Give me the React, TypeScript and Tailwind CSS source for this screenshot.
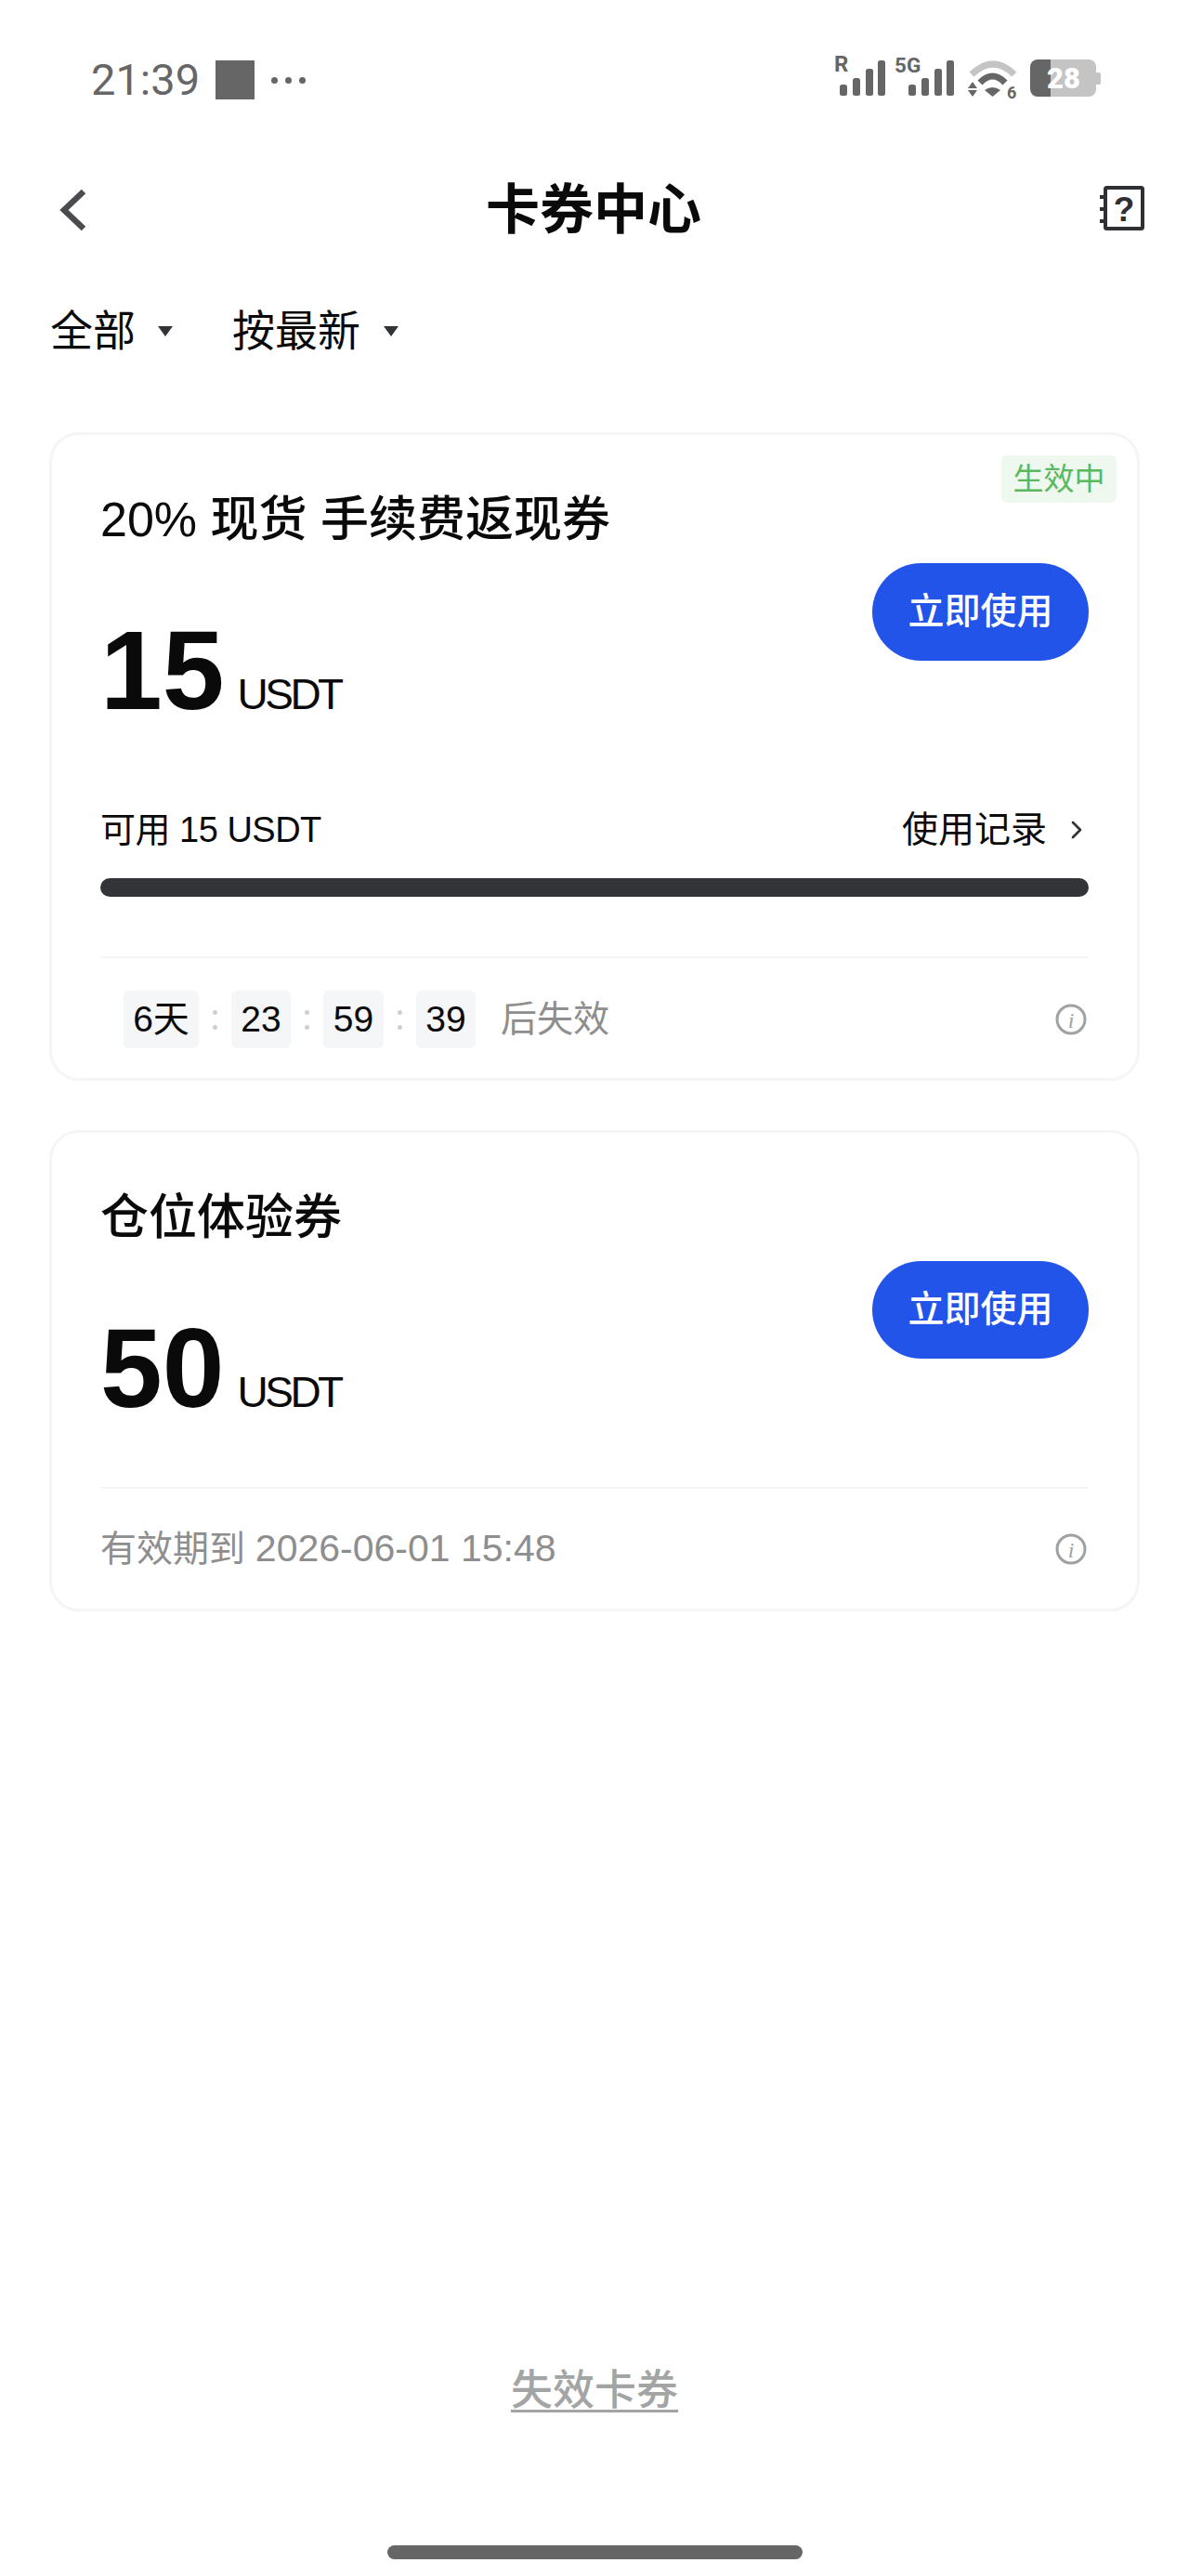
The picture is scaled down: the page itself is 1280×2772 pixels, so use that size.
import { ChevronRight } from "lucide-react";

const FONT = "font-['Liberation_Sans','Noto_Sans_CJK_SC',sans-serif]";

function SignalBars({ x = 0 }: { x?: number }) {
    return (
        <g fill="#666666" transform={`translate(${x} 0)`}>
            <rect x="6" y="31" width="8" height="12" rx="2.5" />
            <rect x="20" y="24" width="8" height="19" rx="2.5" />
            <rect x="34" y="14" width="8" height="29" rx="2.5" />
            <rect x="47" y="5" width="8" height="38" rx="2.5" />
        </g>
    );
}

function StatusIcons() {
    return (
        <svg width="290" height="64" viewBox="0 -8 290 64" className="block">
            {/* R signal */}
            <text x="0" y="17" fontFamily="Roboto, sans-serif" fontWeight="700" fontSize="24" fill="#666666">R</text>
            <SignalBars />
            {/* 5G signal */}
            <text x="65" y="18" fontFamily="Roboto, sans-serif" fontWeight="700" fontSize="22.5" fill="#666666">5G</text>
            <SignalBars x={74} />
            {/* wifi */}
            <path d="M148 20 Q171 -2 194 20" fill="none" stroke="#c4c4c4" strokeWidth="7" />
            <path d="M157 29 Q170.5 15 184 29" fill="none" stroke="#666666" strokeWidth="7" />
            <path d="M162 37 Q170.5 31 179 37 L170.5 44 Z" fill="#666666" />
            <path d="M144 35 L149 28 L154 35 Z M144 37 L154 37 L149 44 Z" fill="#666666" />
            <text x="186" y="46" fontFamily="Roboto, sans-serif" fontWeight="700" fontSize="18" fill="#666666">6</text>
            {/* battery */}
            <path d="M211 12 a8 8 0 0 1 8 -8 h14 v40 h-14 a8 8 0 0 1 -8 -8 Z" fill="#666666" />
            <path d="M233 4 h41 a8 8 0 0 1 8 8 v24 a8 8 0 0 1 -8 8 h-41 Z" fill="#c4c4c4" />
            <path d="M282 18 h3 a2 2 0 0 1 2 2 v9 a2 2 0 0 1 -2 2 h-3 Z" fill="#c4c4c4" />
            <text x="229" y="35" fontFamily="Roboto, sans-serif" fontWeight="900" fontSize="31" fill="#ffffff">28</text>
        </svg>
    );
}

function HelpBookIcon() {
    return (
        <svg width="48" height="48" viewBox="0 0 48 48" className="mb-[4px] block">
            <rect x="6" y="2" width="40" height="44" rx="1.5" fill="none" stroke="#2f3033" strokeWidth="4" />
            <path d="M0 12 h6 M0 25 h6 M0 38 h6" stroke="#2f3033" strokeWidth="4" />
            <text x="26" y="38" textAnchor="middle" fontFamily="Liberation Sans, sans-serif" fontWeight="700" fontSize="37" fill="#2f3033">?</text>
        </svg>
    );
}

function Caret() {
    return (
        <svg width="18" height="13" viewBox="0 0 18 13" className="block">
            <path d="M1 1 L17 1 L9 12 Z" fill="#333438" />
        </svg>
    );
}

function InfoIcon() {
    return (
        <svg width="34" height="34" viewBox="0 0 34 34" className="mr-[2px] block">
            <circle cx="17" cy="17" r="15" fill="none" stroke="#a0a2a2" strokeWidth="3" />
            <text x="17" y="25.500" textAnchor="middle" fontFamily="Liberation Serif, serif" fontStyle="italic" fontSize="24" fill="#a0a2a2">i</text>
        </svg>
    );
}

function TimeCell({ value, className }: { value: string; className: string }) {
    return (
        <div className={`flex h-[62px] items-center justify-center rounded-md bg-[#f5f6f7] text-[39px] text-[#0a0a0a] ${className}`}>
            {value}
        </div>
    );
}

function Colon() {
    return (
        <div className="flex w-[35px] flex-col items-center gap-[11px]">
            <span className="h-[5px] w-[5px] rounded-full bg-[#cfcfcf]" />
            <span className="h-[5px] w-[5px] rounded-full bg-[#cfcfcf]" />
        </div>
    );
}

function UseButton() {
    return (
        <button className="mt-[77px] flex h-[105px] w-[233px] items-center justify-center rounded-full bg-[#2354ea] text-[39px] font-medium text-white">
            立即使用
        </button>
    );
}

function Amount({ value }: { value: string }) {
    return (
        <div className="mt-[72px] flex items-baseline">
            <span className="text-[120px] leading-[120px] font-bold text-[#0a0a0a]">{value}</span>
            <span className="ml-[14px] text-[46px] leading-[50px] tracking-[-3.500px] text-[#0a0a0a]">USDT</span>
        </div>
    );
}

export default function App() {
    return (
        <div className={`relative flex h-[2772px] w-[1280px] flex-col overflow-hidden bg-white ${FONT}`}>
            {/* Status bar */}
            <div className="flex h-[170px] items-start justify-between pt-[52px] pl-[98px] pr-[92px]">
                <div className="mt-[10px] flex items-center">
                    <span className="font-['Roboto',sans-serif] text-[47px] leading-[48px] text-[#666666]">21:39</span>
                    <span className="ml-[17px] h-[42px] w-[42px] bg-[#666666]" />
                    <div className="ml-[18px] flex gap-[8px]">
                        <span className="h-[7px] w-[7px] rounded-full bg-[#666666]" />
                        <span className="h-[7px] w-[7px] rounded-full bg-[#666666]" />
                        <span className="h-[7px] w-[7px] rounded-full bg-[#666666]" />
                    </div>
                </div>
                <StatusIcons />
            </div>

            {/* Header */}
            <div className="flex h-[112px] items-center justify-between pl-[64px] pr-[48px]">
                <svg width="30" height="46" viewBox="0 0 30 46" className="block">
                    <path d="M26 3 L5 23 L26 43" fill="none" stroke="#4a4b4e" strokeWidth="6.500" />
                </svg>
                <h1 className="text-[58px] leading-[70px] font-bold text-[#0a0a0a]">卡券中心</h1>
                <HelpBookIcon />
            </div>

            {/* Filters */}
            <div className="mt-[46px] flex h-[56px] items-center pl-[54px]">
                <span className="text-[46px] leading-[56px] text-[#0a0a0a]">全部</span>
                <span className="ml-[23px]"><Caret /></span>
                <span className="ml-[63px] text-[46px] leading-[56px] text-[#0a0a0a]">按最新</span>
                <span className="ml-[24px]"><Caret /></span>
            </div>

            <div className="mt-[81px] flex flex-col gap-[53px] px-[53px]">
                {/* Fee rebate coupon */}
                <div className="relative rounded-[32px] border-[3px] border-[#f5f5f5] px-[52px] pt-[61px] pb-[32px]">
                    <span className="absolute top-[22px] right-[22px] flex h-[51px] w-[124px] items-center justify-center rounded-md bg-[#eef8ee] text-[33px] text-[#5cb85c]">
                        生效中
                    </span>
                    <div className="flex items-start justify-between">
                        <div>
                            <h2 className="text-[52px] leading-[60px] font-medium text-[#0a0a0a]">20% 现货 手续费返现券</h2>
                            <Amount value="15" />
                        </div>
                        <UseButton />
                    </div>
                    <div className="mt-[87px] flex h-[50px] items-center justify-between text-[#0a0a0a]">
                        <span className="text-[38px] tracking-[-0.500px]">可用 15 USDT</span>
                        <div className="flex items-center">
                            <span className="text-[39px]">使用记录</span>
                            <ChevronRight size={32} strokeWidth={2} className="mr-[-3px] ml-[16px] text-[#333438]" />
                        </div>
                    </div>
                    <div className="mt-[27px] h-[20px] rounded-full bg-[#333438]" />
                    <div className="mt-[64px] h-[2px] bg-[#f5f5f5]" />
                    <div className="mt-[35px] flex items-center justify-between">
                        <div className="flex items-center pl-[25px]">
                            <TimeCell value="6天" className="w-[81px]" />
                            <Colon />
                            <TimeCell value="23" className="w-[64px]" />
                            <Colon />
                            <TimeCell value="59" className="w-[65px]" />
                            <Colon />
                            <TimeCell value="39" className="w-[64px]" />
                            <span className="ml-[27px] text-[39px] text-[#8e8e8e]">后失效</span>
                        </div>
                        <InfoIcon />
                    </div>
                </div>

                {/* Position trial coupon */}
                <div className="rounded-[32px] border-[3px] border-[#f5f5f5] px-[52px] pt-[61px]">
                    <div className="flex items-start justify-between">
                        <div>
                            <h2 className="text-[52px] leading-[60px] font-medium text-[#0a0a0a]">仓位体验券</h2>
                            <Amount value="50" />
                        </div>
                        <UseButton />
                    </div>
                    <div className="mt-[68px] h-[2px] bg-[#f5f5f5]" />
                    <div className="flex h-[129px] items-center justify-between">
                        <span className="text-[39px] text-[#8e8e8e]">
                            有效期到 <span className="text-[41px]">2026-06-01 15:48</span>
                        </span>
                        <InfoIcon />
                    </div>
                </div>
            </div>

            {/* Expired link */}
            <div className="mt-auto flex flex-col items-center pb-[18px]">
                <span className="text-[45px] leading-[56px] font-medium text-[#a3a5a5] underline decoration-[3px] underline-offset-[5px]">失效卡券</span>
                <div className="mt-[138px] h-[15px] w-[447px] rounded-full bg-[#666666]" />
            </div>
        </div>
    );
}
